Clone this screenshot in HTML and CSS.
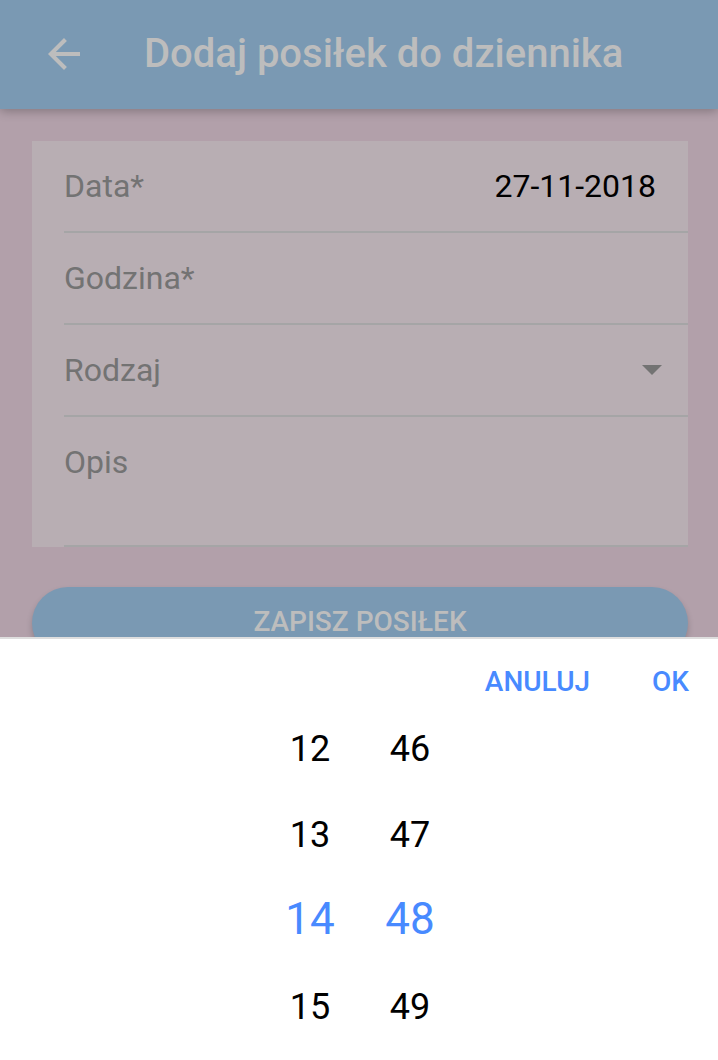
FILE: index.html
```html
<!DOCTYPE html>
<html lang="pl">
<head>
<meta charset="utf-8">
<meta name="viewport" content="width=device-width, initial-scale=1">
<title>Dodaj posiłek do dziennika</title>
<link rel="stylesheet" href="styles.css">
</head>
<body>
<header class="toolbar">
  <button class="back" type="button" aria-label="Wstecz">
    <svg viewBox="0 0 32 32" width="32" height="32" aria-hidden="true"><path fill="currentColor" d="M32 14v4H7.800l11.100 11.100L16 32 0 16 16 0l2.900 2.900L7.800 14z"/></svg>
  </button>
  <h1 class="title">Dodaj posiłek do dziennika</h1>
</header>
<main class="content">
  <form class="form">
    <div class="card">
      <div class="row">
        <label class="label" for="date">Data*</label>
        <input class="field" id="date" type="text" value="27-11-2018">
      </div>
      <div class="row">
        <label class="label" for="time">Godzina*</label>
        <input class="field" id="time" type="text">
      </div>
      <div class="row">
        <label class="label" for="kind">Rodzaj</label>
        <select class="field select" id="kind"><option></option></select>
        <svg class="caret" viewBox="0 0 20 10" width="20" height="10" aria-hidden="true"><path fill="currentColor" d="M0 0h20L10 10z"/></svg>
      </div>
      <div class="row row-tall">
        <label class="label" for="description">Opis</label>
        <textarea class="field area" id="description" rows="2"></textarea>
      </div>
    </div>
    <button class="save" type="submit">ZAPISZ POSIŁEK</button>
  </form>
</main>
<section class="sheet" role="dialog" aria-label="Godzina">
  <div class="actions">
    <button class="action" type="button">ANULUJ</button>
    <button class="action" type="button">OK</button>
  </div>
  <div class="picker">
    <div class="column">
      <button class="option" type="button">12</button>
      <button class="option" type="button">13</button>
      <button class="option selected" type="button">14</button>
      <button class="option" type="button">15</button>
    </div>
    <div class="column">
      <button class="option" type="button">46</button>
      <button class="option" type="button">47</button>
      <button class="option selected" type="button">48</button>
      <button class="option" type="button">49</button>
    </div>
  </div>
</section>
</body>
</html>
```
FILE: styles.css
```css
* {
  box-sizing: border-box;
}

body {
  margin: 0;
  overflow: hidden;
  background: #b2a0aa;
  color: #000;
  font-family: Roboto, sans-serif;
}

button,
input,
select,
textarea {
  margin: 0;
  padding: 0;
  border: 0;
  background: none;
  color: inherit;
  font: inherit;
  outline: 0;
}

.toolbar {
  display: flex;
  align-items: center;
  gap: 64px;
  padding: 24px 48px 25px;
  background: #7a99b3;
  color: #bdbdbd;
  box-shadow: 0 2px 10px rgba(0, 0, 0, 0.28);
}

.back {
  display: flex;
}

.title {
  margin: 0;
  font-size: 40px;
  line-height: 60px;
  font-weight: 500;
  white-space: nowrap;
}

.content {
  padding: 32px 30px 32px 32px;
}

.form {
  display: grid;
  gap: 40px;
}

.card {
  padding-left: 32px;
  background: #b8aeb3;
}

.row {
  display: flex;
  align-items: center;
  gap: 16px;
  height: 92px;
  padding-right: 32px;
  border-bottom: 2px solid #a5a5a6;
  font-size: 32px;
  line-height: 38px;
}

.row-tall {
  align-items: flex-start;
  height: 130px;
  padding-top: 26px;
}

.label {
  color: #737373;
}

.field {
  flex: 1;
  min-width: 0;
  text-align: right;
}

.select {
  appearance: none;
}

.area {
  resize: none;
  text-align: left;
}

.caret {
  margin-right: -6px;
  color: #737373;
}

.save {
  height: 72px;
  padding-bottom: 4px;
  border-radius: 36px;
  background: #7a99b3;
  color: #bdbdbd;
  font-size: 28px;
  font-weight: 500;
  box-shadow: 0 4px 6px rgba(0, 0, 0, 0.2);
}

.sheet {
  position: fixed;
  right: 0;
  bottom: 0;
  left: 0;
  border-top: 2px solid #dedede;
  background: #fff;
}

.actions {
  display: flex;
  justify-content: flex-end;
  gap: 62px;
  padding: 20px 29px 0;
}

.action {
  color: #488aff;
  font-size: 28px;
  line-height: 46px;
  font-weight: 500;
}

.picker {
  display: flex;
  justify-content: center;
  padding: 1px 0 10px 2px;
}

.column {
  display: flex;
  flex-direction: column;
  width: 100px;
}

.option {
  height: 86px;
  font-size: 36px;
}

.selected {
  padding-bottom: 4px;
  color: #488aff;
  font-size: 44px;
}
```
